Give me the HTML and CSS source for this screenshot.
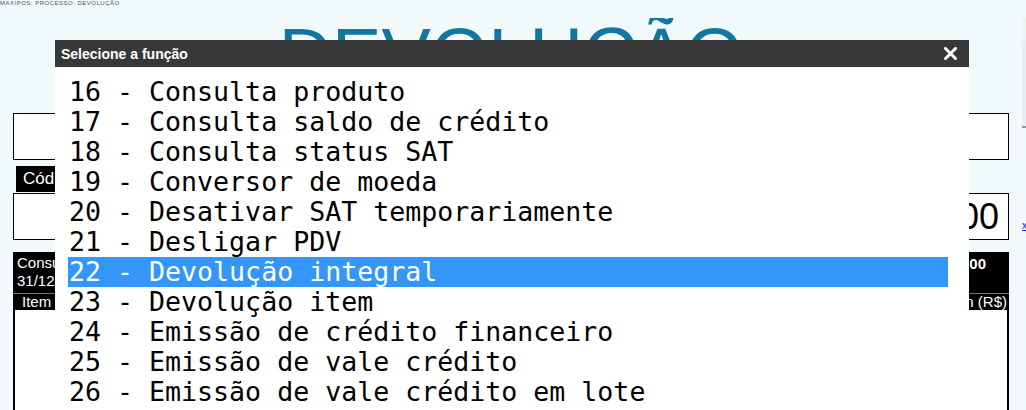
FILE: index.html
```html
<!DOCTYPE html>
<html lang="pt-BR">
<head>
<meta charset="utf-8">
<title>Devolução</title>
<link rel="stylesheet" href="styles.css">
</head>
<body>
<div class="page">
  <div class="main">
    <div class="topnote">MAXIPOS: PROCESSO: DEVOLUÇÃO</div>
    <h1 class="title">DEVOLUÇÃO</h1>
    <div class="field"></div>
    <div class="label">Código do produto</div>
    <div class="field field-value">0,00</div>
    <div class="panel">
      <div class="panel-head">
        <div class="panel-info">
          <div>Consumidor não identificado</div>
          <div>31/12/2023 00:00:00</div>
        </div>
        <div class="panel-total">0,00</div>
      </div>
      <div class="panel-cols">
        <span>Item</span>
        <span>Preço un (R$)</span>
      </div>
      <div class="panel-body"></div>
    </div>
  </div>
  <div class="side">
    <div class="side-box"></div>
    <div class="side-link">x</div>
  </div>
</div>

<div class="dialog">
  <div class="dialog-head">
    <span class="dialog-title">Selecione a função</span>
    <svg class="dialog-close" width="13" height="13" viewBox="0 0 13 13"><path d="M1.5 1.5 L11.5 11.5 M11.5 1.5 L1.5 11.5" stroke="#fff" stroke-width="3" stroke-linecap="square"/></svg>
  </div>
  <ul class="menu">
    <li>16 - Consulta produto</li>
    <li>17 - Consulta saldo de crédito</li>
    <li>18 - Consulta status SAT</li>
    <li>19 - Conversor de moeda</li>
    <li>20 - Desativar SAT temporariamente</li>
    <li>21 - Desligar PDV</li>
    <li class="selected">22 - Devolução integral</li>
    <li>23 - Devolução item</li>
    <li>24 - Emissão de crédito financeiro</li>
    <li>25 - Emissão de vale crédito</li>
    <li>26 - Emissão de vale crédito em lote</li>
    <li>27 - Encerramento de caixa</li>
  </ul>
</div>
</body>
</html>
```

FILE: styles.css
```css
* { box-sizing: border-box; }
html, body { margin: 0; padding: 0; }
body {
  width: 1026px;
  height: 410px;
  overflow: hidden;
  background: #f1f9fb;
  font-family: "Liberation Sans", Arial, sans-serif;
  position: relative;
}
.page {
  display: flex;
  align-items: flex-start;
}
.main {
  width: 1009px;
  padding-left: 13px;
  display: flex;
  flex-direction: column;
}
.topnote {
  height: 18px;
  font-size: 6px;
  line-height: 6px;
  color: #555;
  margin-left: -13px;
  letter-spacing: 0.5px;
}
.title {
  margin: 0 0 21px 0;
  font-weight: normal;
  font-size: 74px;
  line-height: 74px;
  height: 74px;
  color: #1276a0;
  text-align: center;
  overflow: hidden;
}
.field {
  height: 47px;
  border: 1px solid #000;
  background: #fff;
}
.field-value {
  text-align: right;
  font-size: 36px;
  line-height: 45px;
  padding-right: 9px;
  color: #000;
}
.label {
  align-self: flex-start;
  margin: 6px 0 1px 3px;
  height: 26px;
  background: #000;
  color: #fff;
  font-size: 17px;
  line-height: 26px;
  padding: 0 6px 0 7px;
}
.panel {
  margin-top: 12px;
  background: #000;
  color: #fff;
  display: flex;
  flex-direction: column;
}
.panel-head {
  display: flex;
  justify-content: space-between;
  padding: 2px 23px 4px 4px;
  font-size: 15px;
  line-height: 18px;
  height: 41px;
}
.panel-total {
  font-weight: bold;
  font-size: 15px;
  padding-top: 1px;
}
.panel-cols {
  display: flex;
  justify-content: space-between;
  border-top: 1px solid #777;
  height: 17px;
  font-size: 15px;
  line-height: 16px;
  padding: 0 2px 0 9px;
}
.panel-body {
  height: 120px;
  background: #fff;
  border-left: 2px solid #000;
  border-right: 2px solid #000;
}
.side {
  margin-left: 13px;
  width: 4px;
  display: flex;
  flex-direction: column;
}
.side-box {
  margin-top: 18px;
  height: 110px;
  background: #e9eef0;
  border-top: 23px solid #eef2f3;
  border-bottom: 1px solid #999;
  box-shadow: inset 0 -1px 0 #999;
}
.side-link {
  margin-top: 92px;
  font-size: 10px;
  color: #22d;
  text-decoration: underline;
}

.dialog {
  position: absolute;
  left: 55px;
  top: 40px;
  width: 914px;
  height: 400px;
  background: #fff;
}
.dialog-head {
  height: 27px;
  background: #383838;
  display: flex;
  align-items: center;
  justify-content: space-between;
  padding: 0 12px 0 6px;
}
.dialog-title {
  color: #fff;
  font-weight: bold;
  font-size: 14px;
}
.menu {
  list-style: none;
  margin: 0;
  padding: 10px 21px 0 13px;
  font-family: "DejaVu Sans Mono", monospace;
  font-size: 26.6px;
  line-height: 30px;
  color: #000;
}
.menu li {
  height: 30px;
  padding-left: 1px;
  white-space: pre;
}
.menu li.selected {
  background: #3396f8;
  color: #fff;
}
```
